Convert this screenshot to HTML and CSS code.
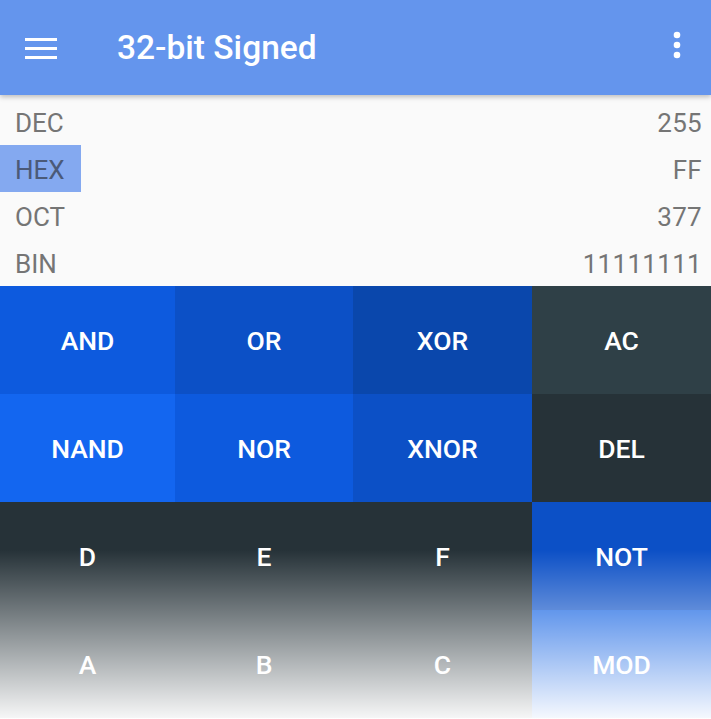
FILE: index.html
```html
<!DOCTYPE html>
<html>
<head>
<meta charset="utf-8">
<link rel="stylesheet" href="styles.css">
</head>
<body>
<div class="app">
  <header class="toolbar">
    <svg class="menu" width="32" height="24" viewBox="0 0 32 24"><rect x="0" y="3" width="32" height="3" fill="#fff"/><rect x="0" y="12" width="32" height="3" fill="#fff"/><rect x="0" y="21" width="32" height="3" fill="#fff"/></svg>
    <h1 class="title">32-bit Signed</h1>
    <svg class="more" width="8" height="30" viewBox="0 0 8 30"><circle cx="4" cy="4" r="3.3" fill="#fff"/><circle cx="4" cy="14" r="3.3" fill="#fff"/><circle cx="4" cy="24" r="3.3" fill="#fff"/></svg>
  </header>
  <section class="values">
    <div class="row"><span class="label">DEC</span><span class="val">255</span></div>
    <div class="row"><span class="label active">HEX</span><span class="val">FF</span></div>
    <div class="row"><span class="label">OCT</span><span class="val">377</span></div>
    <div class="row"><span class="label">BIN</span><span class="val">11111111</span></div>
  </section>
  <section class="keypad">
    <div class="key c1">AND</div>
    <div class="key c2">OR</div>
    <div class="key c3">XOR</div>
    <div class="key c4">AC</div>
    <div class="key c0">NAND</div>
    <div class="key c1">NOR</div>
    <div class="key c2">XNOR</div>
    <div class="key c5">DEL</div>
    <div class="key c5">D</div>
    <div class="key c5">E</div>
    <div class="key c5">F</div>
    <div class="key c2">NOT</div>
    <div class="key c5">A</div>
    <div class="key c5">B</div>
    <div class="key c5">C</div>
    <div class="key c6">MOD</div>
    <div class="fade"></div>
  </section>
</div>
</body>
</html>
```
FILE: styles.css
```css
html, body {
  margin: 0;
  padding: 0;
  background: #fafafa;
  font-family: Roboto, "Liberation Sans", sans-serif;
}
.app {
  width: 711px;
  height: 719px;
  overflow: hidden;
  display: flex;
  flex-direction: column;
}
.toolbar {
  height: 95px;
  flex: none;
  background: #6495ed;
  display: flex;
  align-items: center;
  padding: 0 25px;
  box-sizing: border-box;
  box-shadow: 0 2px 5px rgba(0,0,0,0.25);
  position: relative;
  z-index: 2;
}
.menu {
  flex: none;
  margin-top: -2px;
}
.title {
  margin: 0 0 0 60px;
  font-weight: 500;
  font-size: 33.5px;
  color: #fff;
  flex: 1;
}
.more {
  flex: none;
  margin-right: 5px;
  margin-top: -3px;
}
.values {
  padding-top: 3px;
  display: flex;
  flex-direction: column;
  flex: none;
}
.row {
  height: 47px;
  display: flex;
  align-items: center;
  justify-content: space-between;
  font-size: 26px;
  color: #757575;
}
.label {
  height: 47px;
  display: flex;
  align-items: center;
  padding: 3px 16px 0 15px;
  box-sizing: border-box;
}
.label.active {
  background: #84a9f0;
  color: #4b5a78;
}
.val {
  padding: 3px 9px 0 0;
  letter-spacing: 0.3px;
}
.keypad {
  flex: 1;
  display: grid;
  grid-template-columns: 175px 178px 179px 1fr;
  grid-template-rows: repeat(4, 108px);
  position: relative;
}
.key {
  display: flex;
  align-items: center;
  justify-content: center;
  color: #fff;
  font-weight: 500;
  font-size: 26.5px;
}
.c0 { background: #1366f0; }
.c1 { background: #0d5ade; }
.c2 { background: #0c50c6; }
.c3 { background: #0a47ac; }
.c4 { background: #2f4047; }
.c5 { background: #263238; }
.c6 { background: #1060e2; }
.fade {
  position: absolute;
  left: 0;
  right: 0;
  top: 264px;
  height: 170px;
  background: linear-gradient(to bottom, rgba(255,255,255,0), rgba(255,255,255,0.97));
  pointer-events: none;
}
```
